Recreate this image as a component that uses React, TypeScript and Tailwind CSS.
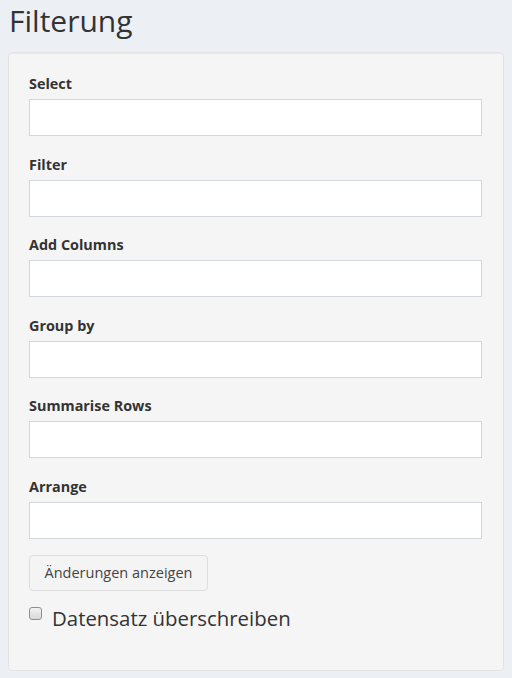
const fields = ["Select", "Filter", "Add Columns", "Group by", "Summarise Rows", "Arrange"]

const App = () => {
  return (
    <div className="min-h-[678px] bg-[#ecf0f5] px-[8px] font-['Open_Sans',sans-serif] text-[#333]">
      <h1 className="h-[52px] pt-[3px] pl-[1px] text-[30px] leading-[36px] font-normal">Filterung</h1>

      <div className="h-[619px] w-[496px] rounded-[4px] border border-[#e3e3e3] bg-[#f5f5f5] pl-[20px] pr-[21px] pt-[21px] shadow-[inset_0_1px_1px_rgba(0,0,0,0.05)]">
        {fields.map((f) => (
          <div key={f} className="mb-[18.5px] flex flex-col">
            <label className="mb-[5px] text-[14.4px] leading-[20px] font-bold">{f}</label>
            <input type="text" className="h-[37px] w-full border border-[#d2d6de] bg-white px-3 text-[14px] outline-none" />
          </div>
        ))}

        <button className="-mt-[2px] h-[36px] w-[179px] rounded-[4px] border border-[#ddd] bg-[#f4f4f4] text-[14.5px] text-[#444]">
          Änderungen anzeigen
        </button>

        <div className="mt-[14px] flex items-start">
          <span className="mt-[2px] block h-[13px] w-[13px] rounded-[3px] border border-[#8f8f8f] bg-gradient-to-b from-[#f2f2f2] to-[#d9d9d9]" />
          <span className="ml-[10px] text-[20.4px] leading-[26px]">Datensatz überschreiben</span>
        </div>
      </div>
    </div>
  )
}

export default App
